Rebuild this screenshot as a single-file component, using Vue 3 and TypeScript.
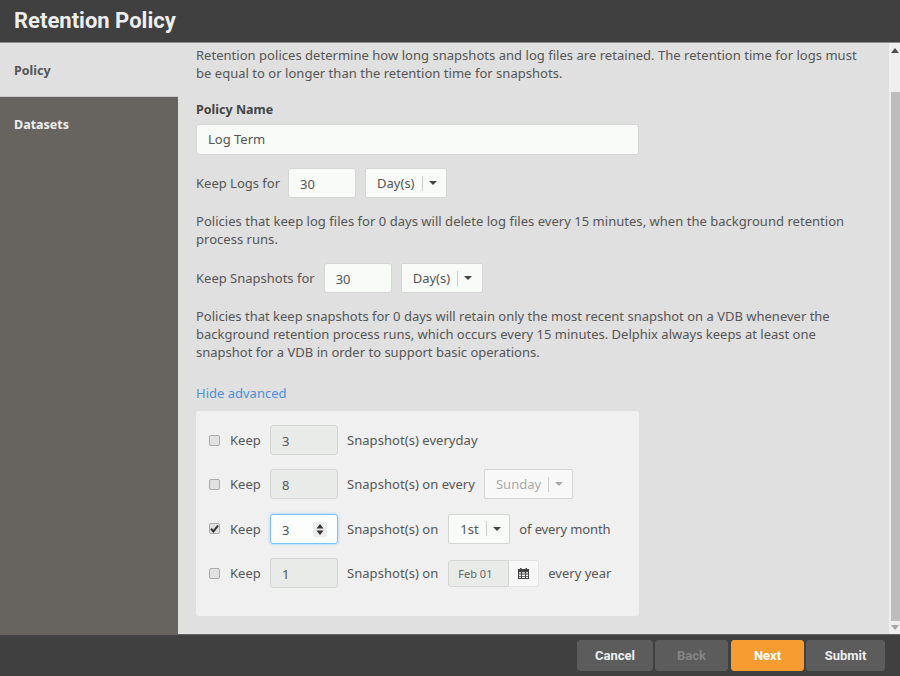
<script setup lang="ts">
interface Row { id: number; checked: boolean; value: string }
const rows: Row[] = [
  { id: 1, checked: false, value: '3' },
  { id: 2, checked: false, value: '8' },
  { id: 3, checked: true, value: '3' },
  { id: 4, checked: false, value: '1' },
]
</script>

<template>
  <div class="app">
    <header class="header">Retention Policy</header>
    <div class="middle">
      <aside class="side">
        <div class="tab active">Policy</div>
        <div class="tab">Datasets</div>
      </aside>
      <main class="content">
        <p class="intro">Retention polices determine how long snapshots and log files are retained. The retention time for logs must be equal to or longer than the retention time for snapshots.</p>
        <label class="name-label">Policy Name</label>
        <div class="input name-input">Log Term</div>
        <div class="line keep-logs">
          <span>Keep Logs for</span>
          <div class="input num">30</div>
          <div class="select days"><span>Day(s)</span><i class="sep"></i><i class="caret"></i></div>
        </div>
        <p class="note n1">Policies that keep log files for 0 days will delete log files every 15 minutes, when the background retention process runs.</p>
        <div class="line keep-snaps">
          <span>Keep Snapshots for</span>
          <div class="input num">30</div>
          <div class="select days"><span>Day(s)</span><i class="sep"></i><i class="caret"></i></div>
        </div>
        <p class="note n2">Policies that keep snapshots for 0 days will retain only the most recent snapshot on a VDB whenever the background retention process runs, which occurs every 15 minutes. Delphix always keeps at least one snapshot for a VDB in order to support basic operations.</p>
        <a class="link">Hide advanced</a>
        <section class="adv">
          <div v-for="r in rows" :key="r.id" class="adv-row">
            <span class="check" :class="{ on: r.checked }">
              <svg v-if="r.checked" width="9" height="9" viewBox="0 0 9 9"><path d="M1 4.800 3.400 7.400 8 1.600" fill="none" stroke="#333" stroke-width="2"/></svg>
            </span>
            <span class="keep">Keep</span>
            <div class="input count" :class="{ focus: r.checked, disabled: !r.checked }">
              {{ r.value }}
              <span v-if="r.checked" class="spin">
                <svg width="14" height="15" viewBox="0 0 14 15"><path d="M7 2 10.500 6.500h-7zM7 13 3.500 8.500h7z" fill="#333"/></svg>
              </span>
            </div>
            <template v-if="r.id === 1"><span class="after">Snapshot(s) everyday</span></template>
            <template v-if="r.id === 2">
              <span class="after">Snapshot(s) on every</span>
              <div class="select sunday"><span>Sunday</span><i class="sep"></i><i class="caret"></i></div>
            </template>
            <template v-if="r.id === 3">
              <span class="after">Snapshot(s) on</span>
              <div class="select first"><span>1st</span><i class="sep"></i><i class="caret"></i></div>
              <span class="tail month">of every month</span>
            </template>
            <template v-if="r.id === 4">
              <span class="after">Snapshot(s) on</span>
              <div class="date">
                <span class="date-val">Feb 01</span>
                <span class="date-btn">
                  <svg width="11" height="11" viewBox="0 0 11 11"><path fill="#444" fill-rule="evenodd" d="M0 1h2V0h1.500v1h4V0H9v1h2v10H0zM1 4.200v1.400h2V4.200zm3 0v1.400h3V4.200zm4 0v1.400h2V4.200zM1 6.500v1.400h2V6.500zm3 0v1.400h3V6.500zm4 0v1.400h2V6.500zM1 8.700v1.300h2V8.700zm3 0v1.300h3V8.700zm4 0v1.300h2V8.700z"/></svg>
                </span>
              </div>
              <span class="tail">every year</span>
            </template>
          </div>
        </section>
      </main>
      <div class="scrollbar">
        <svg class="arrow top" width="8" height="5" viewBox="0 0 8 5"><path d="M4 0 8 5H0z" fill="#505050"/></svg>
        <div class="thumb"></div>
        <svg class="arrow bottom" width="8" height="5" viewBox="0 0 8 5"><path d="M0 0h8L4 5z" fill="#a3a3a3"/></svg>
      </div>
    </div>
    <footer class="footer">
      <button class="btn cancel">Cancel</button>
      <button class="btn back">Back</button>
      <button class="btn next">Next</button>
      <button class="btn submit">Submit</button>
    </footer>
  </div>
</template>

<style scoped>
.app { width: 900px; height: 676px; display: flex; flex-direction: column; font: 13px/18px "Noto Sans", sans-serif; color: #555; background: #e0e0e0; overflow: hidden; }
.header { height: 42px; flex: none; background: #404040; border-bottom: 1px solid #8d8d8d; color: #eee; font: 700 22px/41px Roboto, sans-serif; padding-left: 14px; }
.middle { flex: 1; display: flex; min-height: 0; }
.side { width: 178px; flex: none; background: #676460; }
.tab { height: 54px; box-sizing: border-box; padding: 19px 14px 0; font-weight: 700; font-size: 12.500px; color: #eee; }
.tab.active { background: #e0e0e0; color: #555; border-bottom: 1px solid #c8c8c8; }
.content { flex: 1; min-width: 0; padding: 3px 18px 0; background: #e0e0e0; }
p { margin: 0; }
.intro { width: 670px; letter-spacing: .028px; }
.name-label { display: block; margin-top: 19px; font-weight: 700; font-size: 12.500px; color: #444; }
.input { box-sizing: border-box; background: #f8fbf8; border: 1px solid #d5d5d5; border-radius: 3px; color: #555; }
.name-input { width: 443px; height: 31px; margin-top: 5px; padding: 5px 11px; }
.line { display: flex; align-items: center; gap: 9px; height: 30px; }
.keep-logs { margin-top: 13px; gap: 8px; }
.keep-logs .num { margin-right: 1px; }
.num { width: 68px; height: 30px; padding: 6px 11px; }
.select { box-sizing: border-box; height: 30px; display: flex; align-items: center; background: #f8fbf8; border: 1px solid #d5d5d5; border-radius: 2px; padding-left: 11px; }
.days { width: 82px; }
.sep { width: 1px; height: 15px; background: #ccc; margin-left: 7px; }
.caret { width: 0; height: 0; border: 4px solid transparent; border-top: 4px solid #444; border-bottom: 0; margin-left: 6px; }
.note { width: 670px; }
.n1 { margin-top: 14px; letter-spacing: .028px; }
.keep-snaps { margin-top: 15px; }
.n2 { margin-top: 14px; }
.link { display: block; margin-top: 23px; color: #4a90d9; }
.adv { width: 443px; height: 205px; margin-top: 9px; box-sizing: border-box; background: #f0f0f0; border-radius: 3px; padding: 14px 0 0 13px; }
.adv-row { display: flex; align-items: center; height: 30px; margin-bottom: 14.400px; }
.check { width: 11px; height: 11px; box-sizing: border-box; border: 1px solid #aaa; border-radius: 2px; background: #e2e2e2; display: flex; align-items: center; justify-content: center; }
.keep { margin-left: 10px; width: 40px; }
.count { width: 68px; height: 30px; padding: 6px 11px; position: relative; }
.count.disabled { background: #e8ebe8; }
.count.focus { background: #fbfefd; border-color: #7cc4f5; box-shadow: 0 0 3px #8fd0fa; }
.spin { position: absolute; right: 10px; top: 7px; width: 14px; height: 15px; background: #eee; display: flex; align-items: center; justify-content: center; }
.after { margin-left: 9px; letter-spacing: .05px; }
.sunday { margin-left: 9px; width: 89px; background: #f8f8f8; color: #aaa; }
.sunday .caret { border-top-color: #aaa; }
.first { margin-left: 10px; width: 62px; }
.tail { margin-left: 9px; }
.month { letter-spacing: -.12px; }
.date { margin-left: 10px; display: flex; height: 27px; }
.date-val { width: 61px; box-sizing: border-box; background: #e8ebe8; border: 1px solid #d5d5d5; border-radius: 3px 0 0 3px; padding-left: 9px; font-size: 11px; line-height: 25px; color: #666; }
.date-btn { width: 30px; box-sizing: border-box; background: #f8f8f8; border: 1px solid #e2e2e2; border-left: 0; border-radius: 0 3px 3px 0; display: flex; align-items: center; justify-content: center; }
.scrollbar { width: 11px; flex: none; background: #efefef; display: flex; flex-direction: column; }
.arrow { flex: none; margin-left: 2px; }
.arrow.top { margin-top: 5px; }
.arrow.bottom { margin-top: 4px; margin-bottom: 4px; }
.thumb { width: 9px; flex: 1; margin: 39px 0 0 2px; background: #bdbdbd; }
.footer { height: 42px; flex: none; background: #404040; border-top: 1px solid #666; box-sizing: border-box; display: flex; justify-content: flex-end; align-items: center; padding: 0 15px 0 0; }
.btn { height: 31px; padding: 0; border: 1px solid #5c5c5c; border-radius: 3px; background: #5c5c5c; color: #eee; font: 700 13px Roboto, sans-serif; }
.cancel { width: 76px; }
.back { width: 73px; margin-left: 2px; color: #858585; }
.next { width: 73px; margin-left: 3px; background: #f79c31; border-color: #f79c31; color: #fff; }
.submit { width: 79px; margin-left: 2px; }
</style>
